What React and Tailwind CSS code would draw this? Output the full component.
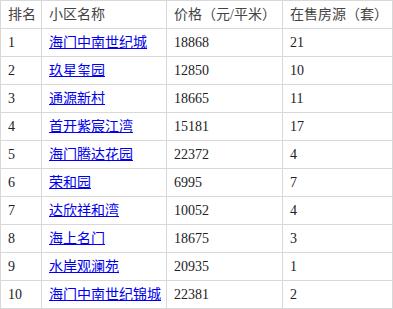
import React from 'react';

const rows = [
  ['1', '海门中南世纪城', '18868', '21'],
  ['2', '玖星玺园', '12850', '10'],
  ['3', '通源新村', '18665', '11'],
  ['4', '首开紫宸江湾', '15181', '17'],
  ['5', '海门腾达花园', '22372', '4'],
  ['6', '荣和园', '6995', '7'],
  ['7', '达欣祥和湾', '10052', '4'],
  ['8', '海上名门', '18675', '3'],
  ['9', '水岸观澜苑', '20935', '1'],
  ['10', '海门中南世纪锦城', '22381', '2'],
];

const cell =
  'border border-solid border-[#d8d8d8] pl-[7px] pr-[2px] py-0 h-[28px] align-middle text-left font-normal whitespace-nowrap overflow-hidden';

export default function App() {
  return (
    <div
      className="bg-white w-[393px] h-[309px] overflow-hidden"
      style={{ fontFamily: '"Liberation Serif", "Noto Sans CJK SC", serif' }}
    >
      <table className="table-fixed border-collapse w-[392px] text-[14px] leading-[16px] text-[#222]">
        <colgroup>
          <col className="w-[41px]" />
          <col className="w-[125px]" />
          <col className="w-[116px]" />
          <col className="w-[110px]" />
        </colgroup>
        <thead>
          <tr>
            <th className={`${cell} text-[#444]`}>排名</th>
            <th className={`${cell} text-[#444]`}>小区名称</th>
            <th className={`${cell} text-[#444]`}>价格（元/平米）</th>
            <th className={`${cell} text-[#444]`}>在售房源（套）</th>
          </tr>
        </thead>
        <tbody>
          {rows.map((r) => (
            <tr key={r[0]}>
              <td className={cell}>{r[0]}</td>
              <td className={cell}>
                <a href="#" className="text-[#0000ee] underline">{r[1]}</a>
              </td>
              <td className={cell}>{r[2]}</td>
              <td className={cell}>{r[3]}</td>
            </tr>
          ))}
        </tbody>
      </table>
    </div>
  );
}
